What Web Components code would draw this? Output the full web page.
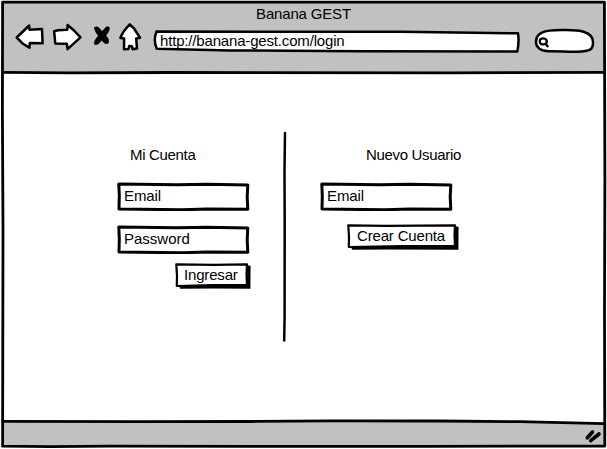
<!DOCTYPE html>
<html lang="es">
<head>
<meta charset="utf-8">
<title>Banana GEST</title>
<style>
html, body { margin: 0; height: 100%; background: #fff; overflow: hidden; }
body { font: 15px/18px "Liberation Sans", Arial, sans-serif; letter-spacing: -.17px; color: #000; }
.login { margin-left: 117px; width: 134px; }
.signup { margin-left: 33px; width: 140px; }
.login > span, .signup > span { letter-spacing: -.33px; }
.login > sketch-input:not(.pass), .signup > sketch-input { letter-spacing: -.1px; }
.pass { margin-top: 14px; letter-spacing: 0; }
.enter { margin: 8px 0 0 57px; width: 78px; }
.create { margin: 12px 0 0 26px; width: 114px; }
</style>
</head>
<body>
<browser-window>
  <span slot="title">Banana GEST</span>
  <tool-bar slot="tools">
    <sketch-icon name="back"></sketch-icon>
    <sketch-icon name="forward"></sketch-icon>
    <sketch-icon name="stop"></sketch-icon>
    <sketch-icon name="home"></sketch-icon>
    <address-field>http://banana-gest.com/login</address-field>
    <sketch-icon name="search"></sketch-icon>
  </tool-bar>
  <account-panel class="login" style="--title-x:13px">
    <span slot="heading">Mi Cuenta</span>
    <sketch-input>Email</sketch-input>
    <sketch-input class="pass">Password</sketch-input>
    <sketch-button class="enter" size="small">Ingresar</sketch-button>
  </account-panel>
  <sketch-divider></sketch-divider>
  <account-panel class="signup" style="--title-x:46px">
    <span slot="heading">Nuevo Usuario</span>
    <sketch-input>Email</sketch-input>
    <sketch-button class="create">Crear Cuenta</sketch-button>
  </account-panel>
</browser-window>
<script>
const define = (name, html) => customElements.define(name, class extends HTMLElement {
  constructor() {
    super();
    this.attachShadow({ mode: "open" }).innerHTML = html;
  }
});

define("browser-window", `
<style>
:host { display: grid; grid-template-rows: 73px 349px 27px; width: 607px; height: 449px; position: relative; isolation: isolate; }
header { padding-top: 5px; display: flex; flex-direction: column; }
.title { text-align: center; }
main { display: flex; align-items: flex-start; }
footer { display: flex; justify-content: flex-end; padding: 5px 3px 0 0; }
.frame { position: absolute; inset: 0; z-index: -1; }
</style>
<svg class="frame" width="607" height="449" fill="none" stroke="#000" stroke-linejoin="round" stroke-linecap="round">
  <path d="M3 2H604L605 73L3 72.5Z" fill="#c1c1c1" stroke="none"/>
  <path d="M3 421.5L170 421.7L330 421L520 421.3L604 423.5L604 446H3Z" fill="#c1c1c1" stroke="none"/>
  <path d="M2.6 2.2H604.4L604.9 180L604.5 310L604.8 446L430 446.3L250 446.4L110 446.2L50 446.7L2.6 446.2L3 230L2.4 110Z" stroke-width="2.8"/>
  <path d="M3 72.3L70 72.8L170 72.5L450 72.8L604 72.3" stroke-width="2.8"/>
  <path d="M3 421.4L140 421.7L250 421.5L330 420.9L440 421L520 421.7L604 423.7" stroke-width="2.8"/>
</svg>
<header><div class="title"><slot name="title"></slot></div><slot name="tools"></slot></header>
<main><slot></slot></main>
<footer><svg width="20" height="18" viewBox="584 427 20 18" fill="none" stroke="#000" stroke-linecap="round" stroke-width="3.6"><path d="M587.3 437.8L592.5 432M590.7 440.7L599 434"/></svg></footer>`);

define("tool-bar", `
<style>:host { display: flex; height: 32px; margin: -1px 0 0 14px; }</style><slot></slot>`);

const icons = {
  back: [14, 30, 7, `<path d="M16.7 37.5L29.2 25.5L29.6 29.8L42 29L42.6 43.3L29.8 43L29.4 47.8L23 43.8Z"/>`],
  forward: [51, 32, 7, `<path d="M54.2 31.3L58 30.2L67.3 29.7L67.6 25L74 30.5L80.5 37.4L67.6 49.2L66.8 43.8L55.2 43.4Z"/>`],
  stop: [90, 23, 3, `<path stroke-width=".8" fill="#000" d="M94.5 27.8Q96 25.8 98.7 27.7L102.2 31.6L106.3 27Q109.5 25.9 109.4 28.7Q108.8 32 105.8 35.5Q109.4 39 108.4 42.8Q105.5 45.4 101.6 40Q97.9 45.8 94.5 44.2Q93.6 41 98.4 35.8Q94.8 31.5 94.5 27.8Z"/>`],
  home: [116, 28, 6, `<path d="M129.8 24.4L134.2 28.7L140 37.7L136.2 38.5L137 48.6L132.7 49.2L131.9 46.2L129.2 46.1L128.5 49L124 49.2L124.1 38.4L120.4 38Q123 31 129.8 24.4Z"/>`],
  search: [532, 66, 0, `<path d="M536 42C536 33 543 30 562 30.1C580 29.6 592.8 31.6 593 42C593.4 50 590 51 577 51.8C567 52 560 51.1 549 51.2C540 51 536 47 536 42Z"/><path stroke-width="2.3" fill="none" d="M543.2 38.3C540.2 38.2 539.4 40.3 539.9 42.2C540.5 44.8 545 45.2 546.5 42.8C547.6 40 545.5 38.4 543.2 38.3ZM545.7 43.8L547.6 46.3"/>`]
};
customElements.define("sketch-icon", class extends HTMLElement {
  connectedCallback() {
    if (this.shadowRoot) return;
    const [x, w, gap, art] = icons[this.getAttribute("name")];
    this.attachShadow({ mode: "open" }).innerHTML = `
<style>:host { display: block; flex: none; width: ${w}px; margin-right: ${gap}px; } svg { display: block; }</style>
<svg width="${w}" height="32" viewBox="${x} 22 ${w} 32" fill="#fff" stroke="#000" stroke-width="2.5" stroke-linejoin="round" stroke-linecap="round">${art}</svg>`;
  }
});

define("address-field", `
<style>
:host { display: grid; flex: none; width: 372px; margin-right: 10px; }
svg, div { grid-area: 1 / 1; }
div { padding: 10px 0 0 10px; }
</style>
<svg width="372" height="32" viewBox="150 22 372 32" fill="#fff" stroke="#000" stroke-width="2.5" stroke-linejoin="round"><path d="M156.5 31.5L275 31.8L400 31.7L518 33.3Q519.3 42 517.3 51.6L360 51.2L230 50.4L156.8 48.8Q153 40 156.5 31.5Z"/></svg>
<div><slot></slot></div>`);

define("account-panel", `
<style>
:host { display: block; flex: none; padding-top: 73px; }
.heading { padding-left: var(--title-x); height: 36px; white-space: nowrap; }
</style>
<div class="heading"><slot name="heading"></slot></div>
<slot></slot>`);

define("sketch-input", `
<style>
:host { display: grid; width: 134px; height: 29px; }
svg, div { grid-area: 1 / 1; }
div { padding: 5px 0 0 7px; }
</style>
<svg width="134" height="29" viewBox="0 0 134 29" fill="#fff" stroke="#000" stroke-width="3" stroke-linejoin="round"><path d="M1.8 2.1L60 2.7L90 2.3L130.8 2.9L130.2 15L130.8 27.2L90 27L65 27.8L2 27L2.3 14Z"/></svg>
<div><slot></slot></div>`);

customElements.define("sketch-button", class extends HTMLElement {
  connectedCallback() {
    if (this.shadowRoot) return;
    const small = this.getAttribute("size") === "small";
    const w = small ? 78 : 114, r = w - 5;
    this.attachShadow({ mode: "open" }).innerHTML = `
<style>
:host { display: grid; height: 28px; }
svg, div { grid-area: 1 / 1; }
div { padding: 4px 0 0 ${small ? 10 : 11}px; white-space: nowrap; }
</style>
<svg width="${w}" height="28" viewBox="0 0 ${w} 28" stroke-linejoin="round">
<path d="M5 23L${r} 22L${r} 3L${r + 3.6} 4L${r + 3.4} 26.8L40 26.4L6 26.8Z"/>
<path fill="#fff" stroke="#000" stroke-width="2.2" d="M2.3 2.4L40 2.8L${r} 2.4L${r - .5} 12L${r} 23.2L${w / 2} 23.2L2.8 24L3 14Z"/>
</svg>
<div><slot></slot></div>`;
  }
});

define("sketch-divider", `
<style>:host { display: block; flex: none; width: 4px; margin: 58px 0 0 32px; } svg { display: block; }</style>
<svg width="4" height="212" viewBox="0 0 4 212" fill="none" stroke="#000" stroke-width="2.5" stroke-linecap="round"><path d="M2 2L1.5 40L1.7 90L1.6 185L1.2 209.5"/></svg>`);
</script>
</body>
</html>
